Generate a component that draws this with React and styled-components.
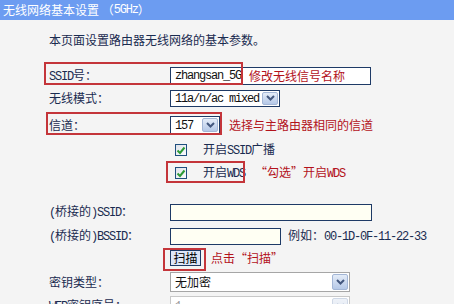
import React from 'react'
import styled, { createGlobalStyle } from 'styled-components'

const GlobalStyle = createGlobalStyle`
  html, body {
    margin: 0;
    padding: 0;
    background: #f4f4f4;
  }
  body {
    font-family: "Noto Sans CJK SC", "Noto Sans", sans-serif;
    font-size: 12px;
    line-height: 16px;
    color: #1a2b50;
  }
`

const Page = styled.div`
  width: 454px;
  height: 304px;
  overflow: hidden;
  background: #f4f4f4;
`

const Header = styled.div`
  height: 20px;
  background: #6c9cf1;
  color: #fff;
  display: flex;
  align-items: center;
  padding-left: 3px;
`

const Body = styled.div`
  padding: 12px 0 0 49px;
`

const Intro = styled.p`
  margin: 0;
  height: 16px;
`

const Row = styled.div`
  position: relative;
  display: flex;
  align-items: center;
  height: 20px;
  margin-top: ${p => p.$mt}px;
`

const Label = styled.div`
  width: 121px;
  flex: none;
  white-space: nowrap;
`

const En = styled.span`
  font-family: "Liberation Mono", monospace;
  letter-spacing: -1.2px;
`

const TextBox = styled.div`
  box-sizing: border-box;
  width: ${p => p.$w}px;
  height: ${p => p.$h || 18}px;
  border: 1px solid #1e3a66;
  background: ${p => p.$bg || '#fff'};
  display: flex;
  align-items: center;
  padding-left: 4px;
  color: #111;
  white-space: nowrap;
`

const Select = styled.div`
  box-sizing: border-box;
  width: ${p => p.$w}px;
  height: ${p => p.$h}px;
  border: 1px solid ${p => p.$border || '#1e3a66'};
  background: #fff;
  display: flex;
  align-items: center;
  padding: 1px;
  color: ${p => (p.$disabled ? '#9a9a9a' : '#111')};
`

const SelectValue = styled.span`
  flex: 1;
  padding-left: 3px;
  white-space: nowrap;
`

const DropBtn = styled.span`
  box-sizing: border-box;
  flex: none;
  width: 16px;
  height: 100%;
  border: 1px solid ${p => (p.$disabled ? '#cfd8e6' : '#a3b6d6')};
  border-radius: 2px;
  background: ${p =>
    p.$disabled
      ? 'linear-gradient(#eef2f8, #dfe6f1)'
      : 'linear-gradient(#e4ecf8, #b5c8e7)'};
  display: flex;
  align-items: center;
  justify-content: center;
`

const Check = styled.span`
  box-sizing: border-box;
  width: 12px;
  height: 12px;
  margin-left: 5px;
  margin-right: 16px;
  border: 1px solid #1f4f7e;
  background: linear-gradient(135deg, #dfe3ea, #fbfbfd);
  display: flex;
  align-items: center;
  justify-content: center;
`

const Spacer = styled.div`
  width: 121px;
  flex: none;
`

const Note = styled.span`
  color: #b3121b;
  margin-left: ${p => p.$ml || 0}px;
  white-space: nowrap;
`

const Hint = styled.span`
  margin-left: 7px;
  white-space: nowrap;
`

const ScanBtn = styled.button`
  box-sizing: border-box;
  width: 31px;
  height: 16px;
  padding: 0;
  border: 1px solid #1e3a66;
  background: #dde6f8;
  color: #000;
  font: inherit;
  line-height: 14px;
`

const Highlight = styled.span`
  position: absolute;
  left: ${p => p.$l}px;
  top: ${p => p.$t}px;
  width: ${p => p.$w}px;
  height: ${p => p.$h}px;
  box-sizing: border-box;
  border: 2px solid #c4353a;
  pointer-events: none;
`

const Chevron = ({ disabled }) => (
  <svg width="9" height="6" viewBox="0 0 9 6">
    <path d="M1 1 L4.5 4.5 L8 1" fill="none" stroke={disabled ? '#b5c0d3' : '#43577e'} strokeWidth="2" />
  </svg>
)

const Tick = () => (
  <svg width="10" height="9" viewBox="0 0 10 9">
    <path d="M1.5 4.5 L4 7 L8.5 1.5" fill="none" stroke="#2c9a35" strokeWidth="2" />
  </svg>
)

const Dropdown = ({ w, h, value, border, disabled }) => (
  <Select $w={w} $h={h} $border={border} $disabled={disabled}>
    <SelectValue>{value}</SelectValue>
    <DropBtn $disabled={disabled}>
      <Chevron disabled={disabled} />
    </DropBtn>
  </Select>
)

export default function App() {
  return (
    <Page>
      <GlobalStyle />
      <Header>
        无线网络基本设置 （<En>5GHz</En>）
      </Header>
      <Body>
        <Intro>本页面设置路由器无线网络的基本参数。</Intro>

        <Row $mt={18}>
          <Label><En>SSID</En>号：</Label>
          <TextBox $w={201}>
            <En>zhangsan_5G</En>
            <Note $ml={8}>修改无线信号名称</Note>
          </TextBox>
          <Highlight $l={-5} $t={-4} $w={199} $h={23} />
        </Row>

        <Row $mt={2}>
          <Label>无线模式：</Label>
          <Dropdown w={110} h={17} value={<En>11a/n/ac mixed</En>} />
        </Row>

        <Row $mt={7}>
          <Label>信道：</Label>
          <Dropdown w={50} h={18} value={<En>157</En>} />
          <Note $ml={9}>选择与主路由器相同的信道</Note>
          <Highlight $l={-3} $t={-3} $w={176} $h={23} />
        </Row>

        <Row $mt={5}>
          <Spacer />
          <Check><Tick /></Check>
          <span>开启<En>SSID</En>广播</span>
        </Row>

        <Row $mt={3}>
          <Spacer />
          <Check><Tick /></Check>
          <span>开启<En>WDS</En></span>
          <Note $ml={10}>“勾选”开启<En>WDS</En></Note>
          <Highlight $l={117} $t={-2} $w={79} $h={22} />
        </Row>

        <Row $mt={19}>
          <Label><En>(</En>桥接的<En>)SSID</En>：</Label>
          <TextBox $w={202} $h={17} $bg="#fffff3" />
        </Row>

        <Row $mt={4}>
          <Label><En>(</En>桥接的<En>)BSSID</En>：</Label>
          <TextBox $w={111} $h={17} $bg="#fffff3" />
          <Hint>例如：<En>00-1D-0F-11-22-33</En></Hint>
        </Row>

        <Row $mt={2}>
          <Spacer />
          <ScanBtn>扫描</ScanBtn>
          <Note $ml={10}>点击“扫描”</Note>
          <Highlight $l={114} $t={0} $w={43} $h={23} />
        </Row>

        <Row $mt={4}>
          <Label>密钥类型：</Label>
          <Dropdown w={180} h={20} value="无加密" border="#a6a6a6" />
        </Row>

        <Row $mt={4}>
          <Label><En>WEP</En>密钥序号：</Label>
          <Dropdown w={180} h={20} value={<En>1</En>} border="#c8c8c8" disabled />
        </Row>
      </Body>
    </Page>
  )
}
